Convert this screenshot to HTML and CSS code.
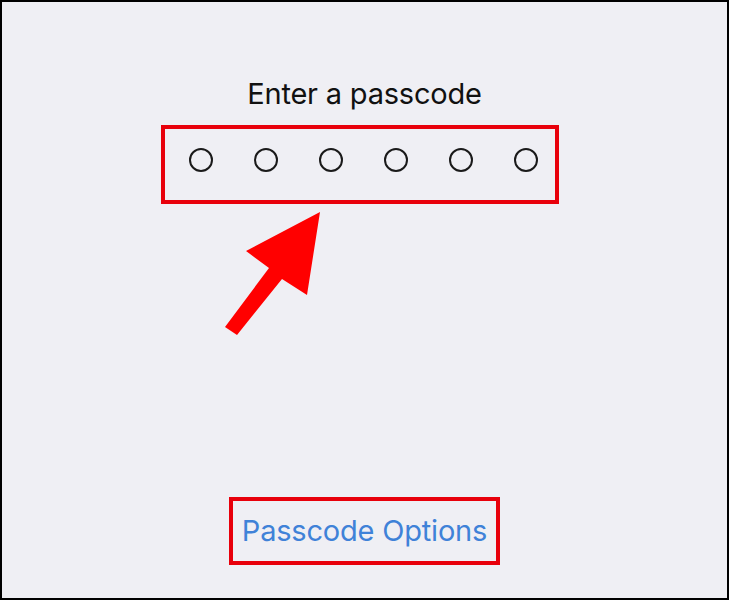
FILE: index.html
```html
<!DOCTYPE html>
<html lang="en">
<head>
    <meta charset="UTF-8">
    <meta name="viewport" content="width=device-width, initial-scale=1.0">
    <title>Enter a passcode</title>
    <link rel="stylesheet" href="styles.css">
</head>
<body>
    <div class="screen">
        <h1 class="title">Enter a passcode</h1>
        <div class="dots-box">
            <span class="dot"></span>
            <span class="dot"></span>
            <span class="dot"></span>
            <span class="dot"></span>
            <span class="dot"></span>
            <span class="dot"></span>
        </div>
        <a class="options" href="#">Passcode Options</a>
        <svg class="arrow" width="729" height="600" viewBox="0 0 729 600">
            <polygon points="320,212 246,251 269,268 225,327 237,335 282,279 307,295" fill="#ff0000"/>
        </svg>
    </div>
</body>
</html>
```

FILE: styles.css
```css
body {
    margin: 0;
    font-family: 'Inter', 'Roboto', sans-serif;
}
.screen {
    position: relative;
    width: 729px;
    height: 600px;
    box-sizing: border-box;
    border: 2px solid #000;
    background: #efeff4;
    display: flex;
    flex-direction: column;
    align-items: center;
}
.title {
    margin: 75px 0 0 0;
    font-size: 29px;
    line-height: 34px;
    font-weight: 400;
    color: #111;
    letter-spacing: -0.2px;
}
.dots-box {
    width: 398px;
    height: 79px;
    box-sizing: border-box;
    margin: 14px 0 0 -9px;
    border: 4px solid #e8000b;
    display: flex;
    align-items: flex-start;
    padding: 19px 0 0 24px;
    gap: 41px;
}
.dot {
    flex: none;
    width: 20px;
    height: 20px;
    border: 2px solid #1a1a1a;
    border-radius: 50%;
}
.options {
    margin-top: 293px;
    width: 271px;
    height: 68px;
    box-sizing: border-box;
    border: 4px solid #e8000b;
    display: flex;
    align-items: center;
    justify-content: center;
    padding: 0 0 2px 0;
    font-size: 29px;
    color: #3f82d8;
    text-decoration: none;
    letter-spacing: -0.2px;
}
.arrow {
    position: absolute;
    left: -2px;
    top: -2px;
    pointer-events: none;
}
```
